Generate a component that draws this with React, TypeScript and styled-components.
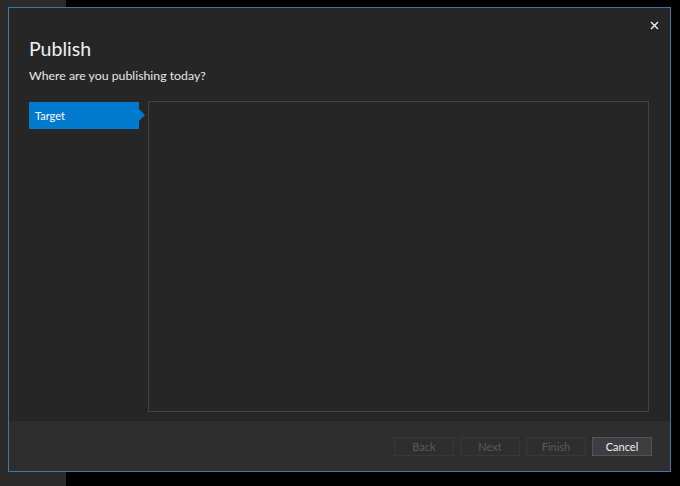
import React from "react";
import styled, { createGlobalStyle } from "styled-components";

const GlobalStyle = createGlobalStyle`
  html, body {
    margin: 0;
    padding: 0;
    width: 680px;
    height: 486px;
    overflow: hidden;
    background: #000;
  }
  * { box-sizing: border-box; }
`;

// the IDE window behind the modal: a dark strip on the left, black elsewhere
const Backdrop = styled.div`
  width: 680px;
  height: 486px;
  padding: 7px 9px 14px 8px;
  background: linear-gradient(to right, #2a2a2b 66px, #000 66px);
  font-family: Lato, "Noto Sans", sans-serif;
`;

const Dialog = styled.div`
  width: 663px;
  height: 465px;
  border: 1px solid #3b78ab;
  background: #262626;
  display: flex;
  flex-direction: column;
  position: relative;
`;

const CloseButton = styled.button`
  position: absolute;
  top: 10px;
  right: 9px;
  width: 14px;
  height: 14px;
  padding: 0;
  border: none;
  background: transparent;
  display: flex;
  align-items: center;
  justify-content: center;
  cursor: pointer;
`;

const Body = styled.div`
  flex: 1;
  display: flex;
  flex-direction: column;
  padding: 27px 20px 9px 20px;
`;

const Title = styled.h1`
  margin: 0;
  font-size: 19.5px;
  font-weight: 400;
  color: #f1f1f1;
  line-height: 28px;
`;

const Subtitle = styled.p`
  margin: 4px 0 0;
  font-size: 12.3px;
  color: #e6e6e6;
  line-height: 18px;
`;

const Main = styled.div`
  flex: 1;
  display: flex;
  margin-top: 16px;
`;

const Steps = styled.div`
  width: 119px;
  display: flex;
  flex-direction: column;
  padding-top: 1px;
`;

const Step = styled.div<{ active?: boolean }>`
  position: relative;
  width: 110px;
  height: 27px;
  display: flex;
  align-items: center;
  padding-left: 6px;
  font-size: 11px;
  color: #fff;
  background: ${(p) => (p.active ? "#007acc" : "transparent")};

  &::after {
    content: "";
    display: ${(p) => (p.active ? "block" : "none")};
    position: absolute;
    right: -6px;
    top: 7px;
    border-style: solid;
    border-width: 6.5px 0 6.5px 6px;
    border-color: transparent transparent transparent #007acc;
  }
`;

const Panel = styled.div`
  flex: 1;
  margin-right: 1px;
  border: 1px solid #434346;
  background: #262626;
`;

const Footer = styled.div`
  height: 50px;
  background: #2e2e2e;
  display: flex;
  justify-content: flex-end;
  align-items: center;
  gap: 6px;
  padding: 1px 18px 0 0;
`;

const Button = styled.button<{ primary?: boolean }>`
  width: 60px;
  height: 19px;
  padding: 0;
  font-family: inherit;
  font-size: 11px;
  line-height: 17px;
  border: 1px solid ${(p) => (p.primary ? "#545457" : "#38383a")};
  background: ${(p) => (p.primary ? "#3e3e42" : "transparent")};
  color: ${(p) => (p.primary ? "#f1f1f1" : "#5a5a5c")};
`;

export default function App() {
  return (
    <>
      <GlobalStyle />
      <Backdrop>
        <Dialog>
          <CloseButton aria-label="Close">
            <svg width="9" height="9" viewBox="0 0 9 9">
              <path d="M1 1L8 8M8 1L1 8" stroke="#f1f1f1" strokeWidth="1.4" />
            </svg>
          </CloseButton>
          <Body>
            <Title>Publish</Title>
            <Subtitle>Where are you publishing today?</Subtitle>
            <Main>
              <Steps>
                <Step active>Target</Step>
              </Steps>
              <Panel />
            </Main>
          </Body>
          <Footer>
            <Button disabled>Back</Button>
            <Button disabled>Next</Button>
            <Button disabled>Finish</Button>
            <Button primary>Cancel</Button>
          </Footer>
        </Dialog>
      </Backdrop>
    </>
  );
}
